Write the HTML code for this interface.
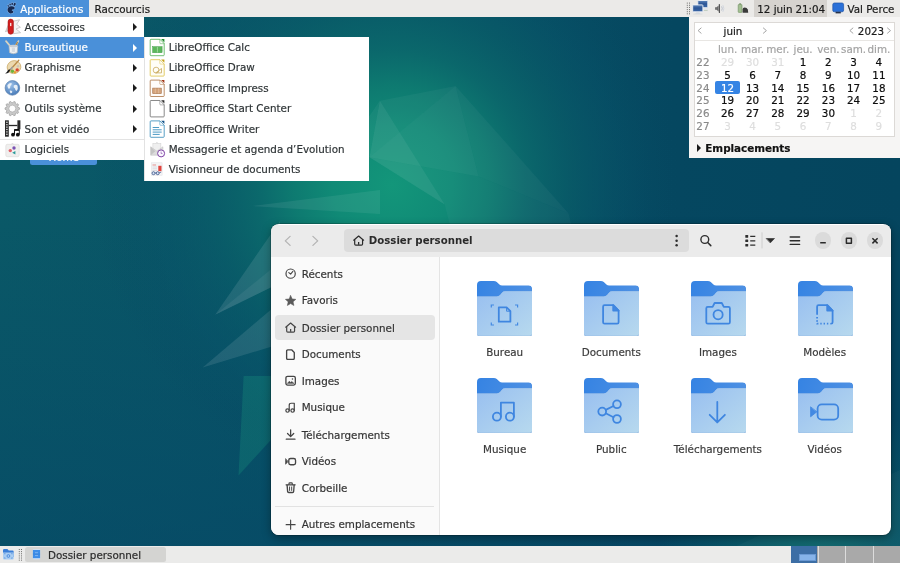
<!DOCTYPE html>
<html lang="fr">
<head>
<meta charset="utf-8">
<title>Bureau</title>
<style>
*{box-sizing:border-box;margin:0;padding:0}
html,body{width:900px;height:563px;overflow:hidden;background:#06485f}
body{position:relative;font-family:"DejaVu Sans","Liberation Sans",sans-serif;font-size:10.35px;color:#2e3436;-webkit-text-stroke:0.18px currentColor}
.abs{position:absolute}
#wall{position:absolute;left:0;top:0;width:900px;height:563px}
/* top panel */
#top,#win,#cal,.menu,#bot{will-change:transform}
#top{position:absolute;left:0;top:0;width:900px;height:16.7px;background:#ebeae8}
#top .t{position:absolute;top:0.5px;height:16.7px;line-height:16.7px;white-space:nowrap;color:#1a1a1a}
#appbtn{position:absolute;left:0;top:0;width:88.5px;height:16.7px;background:#4a90d9}
#clockbg{position:absolute;left:754px;top:0;width:72.7px;height:16.7px;background:#d6d3cf}
/* menus */
.menu{position:absolute;background:#fff}
.mi{position:absolute;left:0;width:100%;height:20.4px;line-height:20.4px;white-space:nowrap}
.mi span{position:absolute;top:0}
.mi.sel{background:#4a90d9;color:#fff}
.arr{position:absolute;width:0;height:0;border-left:4.6px solid #1c1c1c;border-top:4px solid transparent;border-bottom:4px solid transparent}
.sel .arr{border-left-color:#fff}
.ico{position:absolute}
/* calendar */
#cal{position:absolute;left:689.3px;top:16.7px;width:211px;height:141.1px;background:#f6f5f4}
#calbox{position:absolute;left:5px;top:5.3px;width:200.6px;height:114.8px;background:#fff;border:1px solid #dcd9d6}
#cal .c{position:absolute;width:26px;text-align:center;line-height:12.66px;height:12.66px;white-space:nowrap}
#cal .b{color:#0d0d0d;-webkit-text-stroke:0.2px #0d0d0d}
#cal .g{color:#a3a3a3}
#cal .gg{color:#dedede}
#cal .w{color:#8a8a8a}
/* nautilus */
#win{position:absolute;left:270.7px;top:224.1px;width:620px;height:310.9px;border-radius:8px;background:#fff;overflow:hidden;box-shadow:0 0 0 0.7px rgba(0,0,0,.25),0 3px 10px rgba(0,0,0,.35)}
#hb{position:absolute;left:0;top:0;width:100%;height:32.5px;background:#ebebeb}
#side{position:absolute;left:0;top:32.5px;width:168.6px;height:277.5px;background:#fafafa;border-right:1px solid #e4e4e4}
.si{position:absolute;left:30.7px;height:26.75px;line-height:26.75px;white-space:nowrap;color:#333}
.fl{position:absolute;width:106px;text-align:center;line-height:14px;height:14px;color:#3a3a3a;white-space:nowrap}
/* bottom panel */
#bot{position:absolute;left:0;top:546px;width:900px;height:17px;background:#ebebea}
</style>
</head>
<body>
<svg id="wall" viewBox="0 0 900 563">
<defs>
<linearGradient id="wg" x1="0" y1="0" x2="1" y2="0"><stop offset="0" stop-color="#0a5967"/><stop offset="0.45" stop-color="#085366"/><stop offset="0.75" stop-color="#054760"/><stop offset="1" stop-color="#05455e"/></linearGradient>
<linearGradient id="wv" x1="0" y1="0" x2="0" y2="1"><stop offset="0.35" stop-color="#054566" stop-opacity="0"/><stop offset="1" stop-color="#054566" stop-opacity="0.6"/></linearGradient>
<radialGradient id="glow" cx="392" cy="185" r="300" gradientUnits="userSpaceOnUse"><stop offset="0" stop-color="#13967a"/><stop offset="0.2" stop-color="#108a76"/><stop offset="0.33" stop-color="#0e7c71" stop-opacity="0.95"/><stop offset="0.45" stop-color="#0b6a6c" stop-opacity="0.9"/><stop offset="0.6" stop-color="#095f69" stop-opacity="0.65"/><stop offset="0.78" stop-color="#07556a" stop-opacity="0.3"/><stop offset="1" stop-color="#05445f" stop-opacity="0"/></radialGradient>
<radialGradient id="glow2" cx="820" cy="560" r="160" gradientUnits="userSpaceOnUse"><stop offset="0" stop-color="#0c6a6c" stop-opacity="0.9"/><stop offset="1" stop-color="#0c6a6c" stop-opacity="0"/></radialGradient>
</defs>
<rect width="900" height="563" fill="url(#wg)"/>
<rect width="900" height="563" fill="url(#wv)"/>
<rect width="900" height="563" fill="url(#glow)"/>
<rect width="900" height="563" fill="url(#glow2)"/>
<g fill="#ffffff">
<polygon points="455.6,86 568.6,213.4 478.6,176.5" opacity="0.04"/>
<polygon points="455.6,86 478.6,176.5 369.5,157.3" opacity="0.06"/>
<polygon points="379.8,100.7 455.6,86 369.5,157.3" opacity="0.04"/>
<polygon points="379.8,100.7 444.7,204.5 369.5,157.3" opacity="0.06"/>
<polygon points="369.5,157.3 478.6,176.5 568.6,213.4 571.5,226 450,226 444.7,204.5" opacity="0.03"/>
<polygon points="369.5,157.3 379.8,100.7 360,130 350,170" opacity="0.04"/>
<polygon points="252,206 380,190 380,214" opacity="0.07"/>
<polygon points="215.2,314.7 280,221 280,283" opacity="0.1"/>
<polygon points="215.2,314.7 280,262 280,283" opacity="0.06"/>
<polygon points="202.7,367.5 280,302 280,344" opacity="0.1"/>
<polygon points="243.6,376 280,376 280,430 238.5,475.5" fill="#22b08a" opacity="0.22"/>
<polygon points="700,563 900,470 900,563" opacity="0.03"/>
</g>
</svg>

<div id="top">
 <div id="appbtn"></div>
 <div class="t" style="left:20.3px;color:#fff">Applications</div>
 <div class="t" style="left:94.5px">Raccourcis</div>
 <div id="clockbg"></div>
 <svg class="abs" style="left:0;top:0" width="900" height="17" viewBox="0 0 900 17"><g fill="#a9c9f0" stroke="#a9c9f0" stroke-width="1.1" opacity="0.55"><path d="M11.2,6.2 C13.4,6 15,7 14.6,8.4 C14.2,9.6 12.4,9 11.8,10 C11.4,10.8 13.4,10.8 13.4,11.8 C13.2,13 11.6,13.6 10.4,13.4 C8.4,13 7.2,11 7.6,9 C7.9,7.4 9.4,6.3 11.2,6.2 Z"/><ellipse cx="14.6" cy="4.4" rx="1" ry="1.6" transform="rotate(25 14.6 4.4)"/><ellipse cx="12.2" cy="3.9" rx="0.8" ry="1.2" transform="rotate(8 12.2 3.9)"/><ellipse cx="10.1" cy="4.5" rx="0.7" ry="1" transform="rotate(-15 10.1 4.5)"/><ellipse cx="8.3" cy="5.8" rx="0.6" ry="0.9" transform="rotate(-35 8.3 5.8)"/></g><g fill="#17284f"><path d="M11.2,6.2 C13.4,6 15,7 14.6,8.4 C14.2,9.6 12.4,9 11.8,10 C11.4,10.8 13.4,10.8 13.4,11.8 C13.2,13 11.6,13.6 10.4,13.4 C8.4,13 7.2,11 7.6,9 C7.9,7.4 9.4,6.3 11.2,6.2 Z"/><ellipse cx="14.6" cy="4.4" rx="1" ry="1.6" transform="rotate(25 14.6 4.4)"/><ellipse cx="12.2" cy="3.9" rx="0.8" ry="1.2" transform="rotate(8 12.2 3.9)"/><ellipse cx="10.1" cy="4.5" rx="0.7" ry="1" transform="rotate(-15 10.1 4.5)"/><ellipse cx="8.3" cy="5.8" rx="0.6" ry="0.9" transform="rotate(-35 8.3 5.8)"/></g><rect x="686.8" y="2.6" width="1" height="1" fill="#6e6e6c"/><rect x="686.8" y="4.8" width="1" height="1" fill="#6e6e6c"/><rect x="686.8" y="6.9" width="1" height="1" fill="#6e6e6c"/><rect x="686.8" y="9.1" width="1" height="1" fill="#6e6e6c"/><rect x="686.8" y="11.2" width="1" height="1" fill="#6e6e6c"/><rect x="686.8" y="13.3" width="1" height="1" fill="#6e6e6c"/><rect x="689.0" y="2.6" width="1" height="1" fill="#6e6e6c"/><rect x="689.0" y="4.8" width="1" height="1" fill="#6e6e6c"/><rect x="689.0" y="6.9" width="1" height="1" fill="#6e6e6c"/><rect x="689.0" y="9.1" width="1" height="1" fill="#6e6e6c"/><rect x="689.0" y="11.2" width="1" height="1" fill="#6e6e6c"/><rect x="689.0" y="13.3" width="1" height="1" fill="#6e6e6c"/><defs><linearGradient id="scr" x1="0" y1="0" x2="0" y2="1"><stop offset="0" stop-color="#5f86bb"/><stop offset="0.45" stop-color="#2c5596"/><stop offset="1" stop-color="#3a66a6"/></linearGradient></defs><rect x="697.8" y="0.5" width="10" height="7.2" rx="0.7" fill="url(#scr)" stroke="#eef2f7" stroke-width="0.9"/><rect x="703.4" y="8.2" width="4.6" height="3" fill="#e1e4e8"/><rect x="703.8" y="10.2" width="3.8" height="0.7" fill="#b8c6b0"/><rect x="692.7" y="4.9" width="10.2" height="6.9" rx="0.7" fill="url(#scr)" stroke="#eef2f7" stroke-width="0.9"/><path d="M696.4,12.3 L695,14 H700.6 L699.4,12.3 Z" fill="#d9dde2"/><path d="M693.4,14.1 H702.4" stroke="#cfd3d8" stroke-width="0.6"/><path d="M715.2,8.5 L718.6,5.6 V11.4 Z" fill="#6b6b6b"/><rect x="718.8" y="4.1" width="1.2" height="8.8" rx="0.5" fill="#555"/><path d="M715,7.2 H716.8 V9.8 H715 Z" fill="#777"/><path d="M721.6,6.4 Q723,8.5 721.6,10.6" fill="none" stroke="#b5bcc8" stroke-width="0.9"/><path d="M722.9,5.2 Q724.9,8.5 722.9,11.8" fill="none" stroke="#cfd5de" stroke-width="0.9"/><rect x="738.2" y="4.4" width="3.8" height="8" rx="0.6" fill="#a3bf92" stroke="#6f8f60" stroke-width="0.6"/><rect x="739.2" y="3.4" width="1.8" height="1.1" fill="#6f8f60"/><path d="M742.6,9.4 Q742.6,7.6 744.6,7.6 Q747,7.6 747.8,9.6 L748.2,12.8 H742.6 Z" fill="#3a3a3a"/><rect x="832.8" y="3" width="10.8" height="8.8" rx="1.6" fill="#2a70d8" stroke="#1e55a8" stroke-width="0.7"/><path d="M835.6,12.6 H840.8" stroke="#26324a" stroke-width="1.6"/></svg>
 <div class="t" style="left:757.2px">12 juin</div>
 <div class="t" style="left:795.4px">21:04</div>
 <div class="t" style="left:847.4px">Val Perce</div>
</div>

<div class="abs" id="homelbl" style="left:29.6px;top:149.2px;width:67.4px;height:15.8px;line-height:16.4px;border-radius:2.5px;background:#4a90d9;color:#fff;text-align:center;will-change:transform">Home</div>
<div id="win">
<div class="abs" style="left:0;top:0.9px;width:620px;height:310px">
 <div id="hb"></div>
 <div id="side"></div>
 <div class="abs" style="left:73.3px;top:4.2px;width:344.7px;height:22.6px;border-radius:4px;background:#dcdcdc"></div>
 <div class="abs" style="left:97.8px;top:5.1px;line-height:22.6px;font-weight:bold;font-size:10.2px;-webkit-text-stroke:0;color:#2a2a2a;white-space:nowrap">Dossier personnel</div>
 <div class="abs" style="left:543.6px;top:7.4px;width:16.8px;height:16.8px;border-radius:50%;background:#dbdbdb"></div>
 <div class="abs" style="left:569.5px;top:7.4px;width:16.8px;height:16.8px;border-radius:50%;background:#dbdbdb"></div>
 <div class="abs" style="left:595.6px;top:7.4px;width:16.8px;height:16.8px;border-radius:50%;background:#dbdbdb"></div>
 <svg class="abs" style="left:0;top:0" width="620" height="32" viewBox="0 0 620 32" fill="none" stroke-linecap="round" stroke-linejoin="round"><path d="M19.1,11.4 L14.3,15.9 L19.1,20.4" stroke="#b4b4b4" stroke-width="1.3"/><path d="M41.9,11.4 L46.7,15.9 L41.9,20.4" stroke="#b4b4b4" stroke-width="1.3"/><circle cx="405.6" cy="11.1" r="1.25" fill="#2e2e2e"/><circle cx="405.6" cy="15.7" r="1.25" fill="#2e2e2e"/><circle cx="405.6" cy="20.3" r="1.25" fill="#2e2e2e"/><circle cx="433.8" cy="14.5" r="3.9" stroke="#2e2e2e" stroke-width="1.4"/><path d="M436.7,17.5 L439.8,20.6" stroke="#2e2e2e" stroke-width="1.5"/><rect x="474.3" y="10.1" width="2.9" height="2.6" rx="0.5" fill="#2e2e2e"/><path d="M479.2,11.4 H484.3" stroke="#2e2e2e" stroke-width="1.3" stroke-linecap="butt"/><rect x="474.3" y="14.5" width="2.9" height="2.6" rx="0.5" fill="#2e2e2e"/><path d="M479.2,15.8 H484.3" stroke="#2e2e2e" stroke-width="1.3" stroke-linecap="butt"/><rect x="474.3" y="18.9" width="2.9" height="2.6" rx="0.5" fill="#2e2e2e"/><path d="M479.2,20.2 H484.3" stroke="#2e2e2e" stroke-width="1.3" stroke-linecap="butt"/><path d="M491.0,7.8 V23.0" stroke="#c6c6c6" stroke-width="0.8"/><path d="M495.5,13.5 H503.5 L499.5,17.7 Z" fill="#2e2e2e" stroke="#2e2e2e" stroke-width="0.6"/><path d="M519.2,12.0 H528.6" stroke="#2e2e2e" stroke-width="1.4"/><path d="M519.2,15.7 H528.6" stroke="#2e2e2e" stroke-width="1.4"/><path d="M519.2,19.4 H528.6" stroke="#2e2e2e" stroke-width="1.4"/><path d="M549.2,17.8 H554.8" stroke="#2a2a2a" stroke-width="1.5" stroke-linecap="butt"/><rect x="575.4" y="13.2" width="5" height="5" stroke="#2a2a2a" stroke-width="1.5"/><path d="M601.4,13.2 L606.6,18.4 M606.6,13.2 L601.4,18.4" stroke="#2a2a2a" stroke-width="1.5" stroke-linecap="butt"/></svg>
 <div class="abs" style="left:4.3px;top:90.2px;width:160px;height:24.9px;border-radius:4px;background:#e5e5e5"></div>
 <div class="si" style="top:35.82px">Récents</div>
 <div class="si" style="top:62.57px">Favoris</div>
 <div class="si" style="top:90.0px">Dossier personnel</div>
 <div class="si" style="top:116.4px">Documents</div>
 <div class="si" style="top:142.82px">Images</div>
 <div class="si" style="top:169.57px">Musique</div>
 <div class="si" style="top:196.9px">Téléchargements</div>
 <div class="si" style="top:223.4px">Vidéos</div>
 <div class="si" style="top:249.82px">Corbeille</div>
 <svg class="abs" style="left:14.30px;top:43.60px" width="11.25" height="11.25" viewBox="0 0 16 16" fill="none" stroke="#454545" stroke-width="1.9" stroke-linecap="round" stroke-linejoin="round" ><circle cx="8" cy="8" r="6.6" stroke-width="1.7"/><path d="M5.4,6.6 L8,8.6 L11.2,4.8" stroke-width="1.6"/></svg>
 <svg class="abs" style="left:14.30px;top:70.35px" width="11.25" height="11.25" viewBox="0 0 16 16" fill="none" stroke="#454545" stroke-width="1.9" stroke-linecap="round" stroke-linejoin="round" ><path d="M8,0.8 L10.2,5.6 L15.4,6.2 L11.5,9.7 L12.6,14.9 L8,12.2 L3.4,14.9 L4.5,9.7 L0.6,6.2 L5.8,5.6 Z" fill="#5a5a5a" stroke="#5a5a5a" stroke-width="0.8"/></svg>
 <svg class="abs" style="left:14.30px;top:97.10px" width="11.25" height="11.25" viewBox="0 0 16 16" fill="none" stroke="#454545" stroke-width="1.9" stroke-linecap="round" stroke-linejoin="round" ><path d="M1,7.4 L8,1.5 L15,7.4" stroke-width="1.7"/><path d="M2.4,6.6 V12.7 Q2.4,14.3 4,14.3 H12 Q13.6,14.3 13.6,12.7 V6.6" stroke-width="1.7"/><path d="M8,9.9 V14" stroke-width="1.8" stroke-linecap="butt"/></svg>
 <svg class="abs" style="left:14.30px;top:123.85px" width="11.25" height="11.25" viewBox="0 0 16 16" fill="none" stroke="#454545" stroke-width="1.9" stroke-linecap="round" stroke-linejoin="round" ><path d="M3.9,1.2 H9.4 L13.2,5 V13.3 Q13.2,14.9 11.6,14.9 H3.9 Q2.3,14.9 2.3,13.3 V2.8 Q2.3,1.2 3.9,1.2 Z"/></svg>
 <svg class="abs" style="left:14.30px;top:150.60px" width="11.25" height="11.25" viewBox="0 0 16 16" fill="none" stroke="#454545" stroke-width="1.9" stroke-linecap="round" stroke-linejoin="round" ><rect x="1.3" y="1.9" width="13.4" height="12.4" rx="2.4"/><path d="M3.6,11.6 L6.2,8.8 L8,10.6 L9.6,9.2 L12.4,11.6 Z" fill="#454545" stroke-width="0.8"/><circle cx="10.6" cy="5.6" r="1.1" fill="#454545" stroke="none"/></svg>
 <svg class="abs" style="left:14.30px;top:177.35px" width="11.25" height="11.25" viewBox="0 0 16 16" fill="none" stroke="#454545" stroke-width="1.9" stroke-linecap="round" stroke-linejoin="round" ><circle cx="3.6" cy="12.2" r="2.4" stroke-width="1.7"/><circle cx="10.8" cy="12.2" r="2.4" stroke-width="1.7"/><path d="M6,12.2 V4.6 Q6,1.8 8.8,1.8 H13.2 V12.2" stroke-width="1.7"/></svg>
 <svg class="abs" style="left:14.30px;top:204.10px" width="11.25" height="11.25" viewBox="0 0 16 16" fill="none" stroke="#454545" stroke-width="1.9" stroke-linecap="round" stroke-linejoin="round" ><path d="M8,1.2 V10.6 M3.6,6.4 L8,10.8 L12.4,6.4" stroke-width="1.8"/><path d="M1.8,14.4 H14.2" stroke-width="1.8"/></svg>
 <svg class="abs" style="left:14.30px;top:230.85px" width="11.25" height="11.25" viewBox="0 0 16 16" fill="none" stroke="#454545" stroke-width="1.9" stroke-linecap="round" stroke-linejoin="round" ><rect x="5.4" y="3.6" width="9.6" height="8.8" rx="2.6"/><path d="M0.8,4.2 V11.8 L4.2,8 Z" fill="#454545" stroke-width="0.9"/></svg>
 <svg class="abs" style="left:14.30px;top:257.60px" width="11.25" height="11.25" viewBox="0 0 16 16" fill="none" stroke="#454545" stroke-width="1.9" stroke-linecap="round" stroke-linejoin="round" ><path d="M1.6,4 H14.4"/><path d="M5.6,3.6 V2.4 Q5.6,1.2 6.8,1.2 H9.2 Q10.4,1.2 10.4,2.4 V3.6" stroke-width="1.6"/><path d="M3,4.4 L3.7,13.4 Q3.8,14.9 5.3,14.9 H10.7 Q12.2,14.9 12.3,13.4 L13,4.4"/><path d="M6.5,7 V12 M9.5,7 V12" stroke-width="1.4"/></svg>
 <svg class="abs" style="left:14.00px;top:293.90px" width="11.25" height="11.25" viewBox="0 0 16 16" fill="none" stroke="#454545" stroke-width="1.9" stroke-linecap="round" stroke-linejoin="round" ><path d="M8,1.6 V14.4 M1.6,8 H14.4" stroke-width="1.6"/></svg>
 <svg class="abs" style="left:82.30px;top:10.20px" width="11.25" height="11.25" viewBox="0 0 16 16" fill="none" stroke="#2a2a2a" stroke-width="1.9" stroke-linecap="round" stroke-linejoin="round" ><path d="M1,7.4 L8,1.5 L15,7.4" stroke-width="1.7"/><path d="M2.4,6.6 V12.7 Q2.4,14.3 4,14.3 H12 Q13.6,14.3 13.6,12.7 V6.6" stroke-width="1.7"/><path d="M8,9.9 V14" stroke-width="1.8" stroke-linecap="butt"/></svg>
 <div class="abs" style="left:4.3px;top:281.4px;width:159px;height:1px;background:#e2e2e2"></div>
 <div class="si" style="top:286.02px">Autres emplacements</div>
 <svg class="abs" style="left:206.1px;top:56.2px" width="55.2" height="55.4" viewBox="0 0 55.2 55.4">
<defs><linearGradient id="fb0" x1="0" y1="0" x2="1" y2="0.3"><stop offset="0" stop-color="#3583e3"/><stop offset="1" stop-color="#4f91e3"/></linearGradient>
<linearGradient id="ff0" x1="0" y1="0" x2="1" y2="1"><stop offset="0" stop-color="#98bff0"/><stop offset="1" stop-color="#b7d9ee"/></linearGradient></defs>
<path d="M0,4 Q0,0 4,0 H16.8 Q18.6,0 19.8,1.1 L22.4,3.6 Q23.5,4.6 25.1,4.6 H51.6 Q55.2,4.6 55.2,8.2 V50 H0 Z" fill="url(#fb0)"/>
<path d="M0,15.4 H19.8 Q21.8,15.4 23.1,13.9 L25,11.7 Q26.2,10.3 28.2,10.3 H55.2 V52.9 Q55.2,55.4 52.7,55.4 H2.5 Q0,55.4 0,52.9 Z" fill="#8db2de"/>
<path d="M0,15.4 H19.8 Q21.8,15.4 23.1,13.9 L25,11.7 Q26.2,10.3 28.2,10.3 H55.2 V52.2 Q55.2,54.7 52.7,54.7 H2.5 Q0,54.7 0,52.2 Z" fill="url(#ff0)"/>
<g fill="none" stroke="#3f86e0" stroke-width="1.8" stroke-linecap="round" stroke-linejoin="round" stroke-width="1.5"><path d="M21.8,26.4 H29.6 L33.4,30.2 V40.7 H21.8 Z"/><path d="M29.6,26.4 V30.2 H33.4" stroke-width="1"/></g>
<g fill="none" stroke="#4389e2" stroke-width="1.2" stroke-linecap="butt"><path d="M14.3,26.6 V24 H17"/><path d="M38,24 H40.6 V26.6"/><path d="M14.3,41.4 V44 H17"/><path d="M38,44 H40.6 V41.4"/></g>
</svg>
 <div class="fl" style="left:180.7px;top:120.0px">Bureau</div>
 <svg class="abs" style="left:313.0px;top:56.2px" width="55.2" height="55.4" viewBox="0 0 55.2 55.4">
<defs><linearGradient id="fb1" x1="0" y1="0" x2="1" y2="0.3"><stop offset="0" stop-color="#3583e3"/><stop offset="1" stop-color="#4f91e3"/></linearGradient>
<linearGradient id="ff1" x1="0" y1="0" x2="1" y2="1"><stop offset="0" stop-color="#98bff0"/><stop offset="1" stop-color="#b7d9ee"/></linearGradient></defs>
<path d="M0,4 Q0,0 4,0 H16.8 Q18.6,0 19.8,1.1 L22.4,3.6 Q23.5,4.6 25.1,4.6 H51.6 Q55.2,4.6 55.2,8.2 V50 H0 Z" fill="url(#fb1)"/>
<path d="M0,15.4 H19.8 Q21.8,15.4 23.1,13.9 L25,11.7 Q26.2,10.3 28.2,10.3 H55.2 V52.9 Q55.2,55.4 52.7,55.4 H2.5 Q0,55.4 0,52.9 Z" fill="#8db2de"/>
<path d="M0,15.4 H19.8 Q21.8,15.4 23.1,13.9 L25,11.7 Q26.2,10.3 28.2,10.3 H55.2 V52.2 Q55.2,54.7 52.7,54.7 H2.5 Q0,54.7 0,52.2 Z" fill="url(#ff1)"/>
<g fill="none" stroke="#3f86e0" stroke-width="1.8" stroke-linecap="round" stroke-linejoin="round"><path d="M20.6,24.2 H29.2 L34.6,29.6 V41.2 Q34.6,42.7 33.1,42.7 H20.6 Q19.1,42.7 19.1,41.2 V25.7 Q19.1,24.2 20.6,24.2 Z"/><path d="M29.2,24.2 V29.6 H34.6 Z" fill="#4389e2"/></g>
</svg>
 <div class="fl" style="left:287.3px;top:120.0px">Documents</div>
 <svg class="abs" style="left:419.8px;top:56.2px" width="55.2" height="55.4" viewBox="0 0 55.2 55.4">
<defs><linearGradient id="fb2" x1="0" y1="0" x2="1" y2="0.3"><stop offset="0" stop-color="#3583e3"/><stop offset="1" stop-color="#4f91e3"/></linearGradient>
<linearGradient id="ff2" x1="0" y1="0" x2="1" y2="1"><stop offset="0" stop-color="#98bff0"/><stop offset="1" stop-color="#b7d9ee"/></linearGradient></defs>
<path d="M0,4 Q0,0 4,0 H16.8 Q18.6,0 19.8,1.1 L22.4,3.6 Q23.5,4.6 25.1,4.6 H51.6 Q55.2,4.6 55.2,8.2 V50 H0 Z" fill="url(#fb2)"/>
<path d="M0,15.4 H19.8 Q21.8,15.4 23.1,13.9 L25,11.7 Q26.2,10.3 28.2,10.3 H55.2 V52.9 Q55.2,55.4 52.7,55.4 H2.5 Q0,55.4 0,52.9 Z" fill="#8db2de"/>
<path d="M0,15.4 H19.8 Q21.8,15.4 23.1,13.9 L25,11.7 Q26.2,10.3 28.2,10.3 H55.2 V52.2 Q55.2,54.7 52.7,54.7 H2.5 Q0,54.7 0,52.2 Z" fill="url(#ff2)"/>
<g fill="none" stroke="#3f86e0" stroke-width="1.8" stroke-linecap="round" stroke-linejoin="round"><path d="M16.8,25.8 H21.6 L23.6,22 H30.8 L32.8,25.8 H37.4 Q38.9,25.8 38.9,27.3 V41.2 Q38.9,42.7 37.4,42.7 H16.8 Q15.3,42.7 15.3,41.2 V27.3 Q15.3,25.8 16.8,25.8 Z"/><circle cx="27.1" cy="33.7" r="4.6"/></g>
</svg>
 <div class="fl" style="left:393.9px;top:120.0px">Images</div>
 <svg class="abs" style="left:526.5px;top:56.2px" width="55.2" height="55.4" viewBox="0 0 55.2 55.4">
<defs><linearGradient id="fb3" x1="0" y1="0" x2="1" y2="0.3"><stop offset="0" stop-color="#3583e3"/><stop offset="1" stop-color="#4f91e3"/></linearGradient>
<linearGradient id="ff3" x1="0" y1="0" x2="1" y2="1"><stop offset="0" stop-color="#98bff0"/><stop offset="1" stop-color="#b7d9ee"/></linearGradient></defs>
<path d="M0,4 Q0,0 4,0 H16.8 Q18.6,0 19.8,1.1 L22.4,3.6 Q23.5,4.6 25.1,4.6 H51.6 Q55.2,4.6 55.2,8.2 V50 H0 Z" fill="url(#fb3)"/>
<path d="M0,15.4 H19.8 Q21.8,15.4 23.1,13.9 L25,11.7 Q26.2,10.3 28.2,10.3 H55.2 V52.9 Q55.2,55.4 52.7,55.4 H2.5 Q0,55.4 0,52.9 Z" fill="#8db2de"/>
<path d="M0,15.4 H19.8 Q21.8,15.4 23.1,13.9 L25,11.7 Q26.2,10.3 28.2,10.3 H55.2 V52.2 Q55.2,54.7 52.7,54.7 H2.5 Q0,54.7 0,52.2 Z" fill="url(#ff3)"/>
<g fill="none" stroke="#3f86e0" stroke-width="1.8" stroke-linecap="round" stroke-linejoin="round"><path d="M19.1,33 V25.7 Q19.1,24.2 20.6,24.2 H29.2 L34.6,29.6 V41.2 Q34.6,42.7 33.1,42.7"/><path d="M29.2,24.2 V29.6 H34.6 Z" fill="#4389e2"/><path d="M19.1,36 V42.7 H31" stroke-dasharray="1.4 1.9" stroke-linecap="butt"/></g>
</svg>
 <div class="fl" style="left:500.7px;top:120.0px">Modèles</div>
 <svg class="abs" style="left:206.1px;top:153.2px" width="55.2" height="55.4" viewBox="0 0 55.2 55.4">
<defs><linearGradient id="fb4" x1="0" y1="0" x2="1" y2="0.3"><stop offset="0" stop-color="#3583e3"/><stop offset="1" stop-color="#4f91e3"/></linearGradient>
<linearGradient id="ff4" x1="0" y1="0" x2="1" y2="1"><stop offset="0" stop-color="#98bff0"/><stop offset="1" stop-color="#b7d9ee"/></linearGradient></defs>
<path d="M0,4 Q0,0 4,0 H16.8 Q18.6,0 19.8,1.1 L22.4,3.6 Q23.5,4.6 25.1,4.6 H51.6 Q55.2,4.6 55.2,8.2 V50 H0 Z" fill="url(#fb4)"/>
<path d="M0,15.4 H19.8 Q21.8,15.4 23.1,13.9 L25,11.7 Q26.2,10.3 28.2,10.3 H55.2 V52.9 Q55.2,55.4 52.7,55.4 H2.5 Q0,55.4 0,52.9 Z" fill="#8db2de"/>
<path d="M0,15.4 H19.8 Q21.8,15.4 23.1,13.9 L25,11.7 Q26.2,10.3 28.2,10.3 H55.2 V52.2 Q55.2,54.7 52.7,54.7 H2.5 Q0,54.7 0,52.2 Z" fill="url(#ff4)"/>
<g fill="none" stroke="#3f86e0" stroke-width="1.8" stroke-linecap="round" stroke-linejoin="round"><circle cx="19.9" cy="38.7" r="4"/><circle cx="32.9" cy="38.7" r="4"/><path d="M23.9,38.7 V24.6 H36.9 V38.7"/></g>
</svg>
 <div class="fl" style="left:180.7px;top:217.0px">Musique</div>
 <svg class="abs" style="left:313.0px;top:153.2px" width="55.2" height="55.4" viewBox="0 0 55.2 55.4">
<defs><linearGradient id="fb5" x1="0" y1="0" x2="1" y2="0.3"><stop offset="0" stop-color="#3583e3"/><stop offset="1" stop-color="#4f91e3"/></linearGradient>
<linearGradient id="ff5" x1="0" y1="0" x2="1" y2="1"><stop offset="0" stop-color="#98bff0"/><stop offset="1" stop-color="#b7d9ee"/></linearGradient></defs>
<path d="M0,4 Q0,0 4,0 H16.8 Q18.6,0 19.8,1.1 L22.4,3.6 Q23.5,4.6 25.1,4.6 H51.6 Q55.2,4.6 55.2,8.2 V50 H0 Z" fill="url(#fb5)"/>
<path d="M0,15.4 H19.8 Q21.8,15.4 23.1,13.9 L25,11.7 Q26.2,10.3 28.2,10.3 H55.2 V52.9 Q55.2,55.4 52.7,55.4 H2.5 Q0,55.4 0,52.9 Z" fill="#8db2de"/>
<path d="M0,15.4 H19.8 Q21.8,15.4 23.1,13.9 L25,11.7 Q26.2,10.3 28.2,10.3 H55.2 V52.2 Q55.2,54.7 52.7,54.7 H2.5 Q0,54.7 0,52.2 Z" fill="url(#ff5)"/>
<g fill="none" stroke="#3f86e0" stroke-width="1.8" stroke-linecap="round" stroke-linejoin="round"><circle cx="18.2" cy="33.6" r="3.9"/><circle cx="33" cy="26.3" r="3.9"/><circle cx="33" cy="41" r="3.9"/><path d="M21.7,31.9 L29.5,28 M21.7,35.3 L29.5,39.3"/></g>
</svg>
 <div class="fl" style="left:287.3px;top:217.0px">Public</div>
 <svg class="abs" style="left:419.8px;top:153.2px" width="55.2" height="55.4" viewBox="0 0 55.2 55.4">
<defs><linearGradient id="fb6" x1="0" y1="0" x2="1" y2="0.3"><stop offset="0" stop-color="#3583e3"/><stop offset="1" stop-color="#4f91e3"/></linearGradient>
<linearGradient id="ff6" x1="0" y1="0" x2="1" y2="1"><stop offset="0" stop-color="#98bff0"/><stop offset="1" stop-color="#b7d9ee"/></linearGradient></defs>
<path d="M0,4 Q0,0 4,0 H16.8 Q18.6,0 19.8,1.1 L22.4,3.6 Q23.5,4.6 25.1,4.6 H51.6 Q55.2,4.6 55.2,8.2 V50 H0 Z" fill="url(#fb6)"/>
<path d="M0,15.4 H19.8 Q21.8,15.4 23.1,13.9 L25,11.7 Q26.2,10.3 28.2,10.3 H55.2 V52.9 Q55.2,55.4 52.7,55.4 H2.5 Q0,55.4 0,52.9 Z" fill="#8db2de"/>
<path d="M0,15.4 H19.8 Q21.8,15.4 23.1,13.9 L25,11.7 Q26.2,10.3 28.2,10.3 H55.2 V52.2 Q55.2,54.7 52.7,54.7 H2.5 Q0,54.7 0,52.2 Z" fill="url(#ff6)"/>
<g fill="none" stroke="#3f86e0" stroke-width="1.8" stroke-linecap="round" stroke-linejoin="round"><path d="M26.3,24 V44.4 M18.7,36.8 L26.3,44.4 L33.9,36.8"/></g>
</svg>
 <div class="fl" style="left:393.9px;top:217.0px">Téléchargements</div>
 <svg class="abs" style="left:526.5px;top:153.2px" width="55.2" height="55.4" viewBox="0 0 55.2 55.4">
<defs><linearGradient id="fb7" x1="0" y1="0" x2="1" y2="0.3"><stop offset="0" stop-color="#3583e3"/><stop offset="1" stop-color="#4f91e3"/></linearGradient>
<linearGradient id="ff7" x1="0" y1="0" x2="1" y2="1"><stop offset="0" stop-color="#98bff0"/><stop offset="1" stop-color="#b7d9ee"/></linearGradient></defs>
<path d="M0,4 Q0,0 4,0 H16.8 Q18.6,0 19.8,1.1 L22.4,3.6 Q23.5,4.6 25.1,4.6 H51.6 Q55.2,4.6 55.2,8.2 V50 H0 Z" fill="url(#fb7)"/>
<path d="M0,15.4 H19.8 Q21.8,15.4 23.1,13.9 L25,11.7 Q26.2,10.3 28.2,10.3 H55.2 V52.9 Q55.2,55.4 52.7,55.4 H2.5 Q0,55.4 0,52.9 Z" fill="#8db2de"/>
<path d="M0,15.4 H19.8 Q21.8,15.4 23.1,13.9 L25,11.7 Q26.2,10.3 28.2,10.3 H55.2 V52.2 Q55.2,54.7 52.7,54.7 H2.5 Q0,54.7 0,52.2 Z" fill="url(#ff7)"/>
<g fill="none" stroke="#3f86e0" stroke-width="1.8" stroke-linecap="round" stroke-linejoin="round"><rect x="19.6" y="26.4" width="20.6" height="15.3" rx="4.2"/><path d="M12.6,29.2 V38.8 L18.6,34 Z" fill="#4389e2" stroke-width="0.8"/></g>
</svg>
 <div class="fl" style="left:500.7px;top:217.0px">Vidéos</div>
</div>
</div>
<div id="bot">
 <div class="abs" style="left:25px;top:1.4px;width:140.6px;height:14.2px;border-radius:2.5px;background:#d4d4d2"></div>
 <svg class="abs" style="left:0;top:0" width="60" height="17" viewBox="0 546 60 17"><path d="M3,550.2 Q3,549 4.2,549 H7.4 L8.8,550.6 H12.6 Q13.7,550.6 13.7,551.7 V557 H3 Z" fill="#3a7fd8"/><path d="M3,552.6 H13.7 V558.4 Q13.7,559.4 12.7,559.4 H4 Q3,559.4 3,558.4 Z" fill="#a9cdf2"/><circle cx="8.4" cy="556" r="1.4" fill="none" stroke="#3f83da" stroke-width="0.8"/><path d="M4.6,554.2 v-0.6 h0.8 M11.4,553.6 h0.8 v0.6 M4.6,557.6 v0.6 h0.8 M11.4,558.2 h0.8 v-0.6" fill="none" stroke="#3f83da" stroke-width="0.7"/><rect x="18.8" y="549.00" width="1" height="1" fill="#6e6e6c"/><rect x="18.8" y="551.13" width="1" height="1" fill="#6e6e6c"/><rect x="18.8" y="553.26" width="1" height="1" fill="#6e6e6c"/><rect x="18.8" y="555.39" width="1" height="1" fill="#6e6e6c"/><rect x="18.8" y="557.52" width="1" height="1" fill="#6e6e6c"/><rect x="18.8" y="559.65" width="1" height="1" fill="#6e6e6c"/><rect x="21.0" y="549.00" width="1" height="1" fill="#6e6e6c"/><rect x="21.0" y="551.13" width="1" height="1" fill="#6e6e6c"/><rect x="21.0" y="553.26" width="1" height="1" fill="#6e6e6c"/><rect x="21.0" y="555.39" width="1" height="1" fill="#6e6e6c"/><rect x="21.0" y="557.52" width="1" height="1" fill="#6e6e6c"/><rect x="21.0" y="559.65" width="1" height="1" fill="#6e6e6c"/></svg>
 <svg class="abs" style="left:32px;top:3.4px" width="9" height="10.4" viewBox="0 0 9 10.4"><rect x="0.9" y="0.2" width="7.2" height="10" rx="0.6" fill="#cfe3fb"/><rect x="0.9" y="1" width="7.2" height="8.2" fill="#3f8ee9"/><path d="M3,3.8 h3 M3,6.6 h3" stroke="#9ec6f4" stroke-width="0.7"/><path d="M0.9,5.1 h7.2" stroke="#3078d0" stroke-width="0.4"/></svg>
 <div class="abs" style="left:48px;top:1.9px;line-height:14.2px;white-space:nowrap;color:#2a2a2a">Dossier personnel</div>
 <div class="abs" style="left:791.3px;top:0;width:108.7px;height:17px;background:#a9a9a9"></div>
 <div class="abs" style="left:791.3px;top:0;width:26px;height:17px;background:#3c6ea5"></div>
 <div class="abs" style="left:798.7px;top:7.7px;width:17.6px;height:7.8px;background:#86b3e9;border:1px solid #6a99d3"></div>
 <div class="abs" style="left:818.2px;top:0;width:1.1px;height:17px;background:#dcdcdc"></div>
 <div class="abs" style="left:845.2px;top:0;width:1.1px;height:17px;background:#dcdcdc"></div>
 <div class="abs" style="left:872.9px;top:0;width:1.1px;height:17px;background:#dcdcdc"></div>
</div>
<div id="cal">
<div id="calbox"></div>
 <svg class="abs" style="left:0;top:0" width="211" height="30" viewBox="0 0 211 30" fill="none" stroke="#9a9a9a" stroke-width="0.9" stroke-linecap="round" stroke-linejoin="round"><path d="M12.1,11.0 L9.1,13.6 L12.1,16.2"/><path d="M74.4,11.0 L77.4,13.6 L74.4,16.2"/><path d="M163.9,11.0 L160.9,13.6 L163.9,16.2"/><path d="M198.5,11.0 L201.5,13.6 L198.5,16.2"/></svg>
 <div class="c" style="left:22px;top:8px;width:44px;color:#1a1a1a">juin</div>
 <div class="c" style="left:160px;top:8px;width:44px;color:#1a1a1a">2023</div>
 <div class="abs" style="left:6px;top:22.7px;width:198.6px;height:1px;background:#e8e6e3"></div>
 <div class="c g" style="left:25.6px;top:26.2px">lun.</div>
 <div class="c g" style="left:50.6px;top:26.2px">mar.</div>
 <div class="c g" style="left:75.8px;top:26.2px">mer.</div>
 <div class="c g" style="left:101.1px;top:26.2px">jeu.</div>
 <div class="c g" style="left:126.4px;top:26.2px">ven.</div>
 <div class="c g" style="left:151.6px;top:26.2px">sam.</div>
 <div class="c g" style="left:176.9px;top:26.2px">dim.</div>
 <div class="c w" style="left:0.9px;top:39.20px">22</div>
 <div class="c gg" style="left:25.6px;top:39.20px">29</div>
 <div class="c gg" style="left:50.6px;top:39.20px">30</div>
 <div class="c gg" style="left:75.8px;top:39.20px">31</div>
 <div class="c b" style="left:101.1px;top:39.20px">1</div>
 <div class="c b" style="left:126.4px;top:39.20px">2</div>
 <div class="c b" style="left:151.6px;top:39.20px">3</div>
 <div class="c b" style="left:176.9px;top:39.20px">4</div>
 <div class="c w" style="left:0.9px;top:51.86px">23</div>
 <div class="c b" style="left:25.6px;top:51.86px">5</div>
 <div class="c b" style="left:50.6px;top:51.86px">6</div>
 <div class="c b" style="left:75.8px;top:51.86px">7</div>
 <div class="c b" style="left:101.1px;top:51.86px">8</div>
 <div class="c b" style="left:126.4px;top:51.86px">9</div>
 <div class="c b" style="left:151.6px;top:51.86px">10</div>
 <div class="c b" style="left:176.9px;top:51.86px">11</div>
 <div class="c w" style="left:0.9px;top:64.52px">24</div>
 <div class="abs" style="left:26.1px;top:64.12px;width:24.6px;height:12.4px;background:#3584e4;border-radius:2px"></div>
 <div class="c" style="left:25.6px;top:64.52px;color:#fff">12</div>
 <div class="c b" style="left:50.6px;top:64.52px">13</div>
 <div class="c b" style="left:75.8px;top:64.52px">14</div>
 <div class="c b" style="left:101.1px;top:64.52px">15</div>
 <div class="c b" style="left:126.4px;top:64.52px">16</div>
 <div class="c b" style="left:151.6px;top:64.52px">17</div>
 <div class="c b" style="left:176.9px;top:64.52px">18</div>
 <div class="c w" style="left:0.9px;top:77.18px">25</div>
 <div class="c b" style="left:25.6px;top:77.18px">19</div>
 <div class="c b" style="left:50.6px;top:77.18px">20</div>
 <div class="c b" style="left:75.8px;top:77.18px">21</div>
 <div class="c b" style="left:101.1px;top:77.18px">22</div>
 <div class="c b" style="left:126.4px;top:77.18px">23</div>
 <div class="c b" style="left:151.6px;top:77.18px">24</div>
 <div class="c b" style="left:176.9px;top:77.18px">25</div>
 <div class="c w" style="left:0.9px;top:89.84px">26</div>
 <div class="c b" style="left:25.6px;top:89.84px">26</div>
 <div class="c b" style="left:50.6px;top:89.84px">27</div>
 <div class="c b" style="left:75.8px;top:89.84px">28</div>
 <div class="c b" style="left:101.1px;top:89.84px">29</div>
 <div class="c b" style="left:126.4px;top:89.84px">30</div>
 <div class="c gg" style="left:151.6px;top:89.84px">1</div>
 <div class="c gg" style="left:176.9px;top:89.84px">2</div>
 <div class="c w" style="left:0.9px;top:102.50px">27</div>
 <div class="c gg" style="left:25.6px;top:102.50px">3</div>
 <div class="c gg" style="left:50.6px;top:102.50px">4</div>
 <div class="c gg" style="left:75.8px;top:102.50px">5</div>
 <div class="c gg" style="left:101.1px;top:102.50px">6</div>
 <div class="c gg" style="left:126.4px;top:102.50px">7</div>
 <div class="c gg" style="left:151.6px;top:102.50px">8</div>
 <div class="c gg" style="left:176.9px;top:102.50px">9</div>
 <div class="abs" style="left:7.8px;top:127.2px;width:0;height:0;border-left:4.7px solid #1a1a1a;border-top:4.1px solid transparent;border-bottom:4.1px solid transparent"></div>
 <div class="abs" style="left:16.3px;top:123.5px;line-height:14px;font-weight:bold;color:#111;white-space:nowrap">Emplacements</div>
</div>
<div class="menu" id="m1" style="left:0;top:16.7px;width:144.3px;height:143.4px">
 <svg class="abs" style="left:0;top:0;z-index:2" width="30" height="144" viewBox="0 16.7 30 144"><path d="M13,21 L19.6,19.4 L16.6,24 L20.4,27 L16,28.6 L20.6,32.4 L13.4,33.4 Z" fill="#f4f4f4" stroke="#b9b9b9" stroke-width="0.7"/><path d="M8.6,24 L5.4,31.4 L8,30.6 Z" fill="#dcdcdc" stroke="#aaa" stroke-width="0.5"/><rect x="8" y="18.8" width="5.4" height="15.2" rx="2.7" fill="#d11f1f" stroke="#9a1010" stroke-width="0.5"/><rect x="10" y="22.6" width="1.4" height="3.2" fill="#f6dada"/><path d="M6,40.8 L12,48 M18.4,40.8 L14,48" stroke="#d8d2bf" stroke-width="1.7" stroke-linecap="round"/><path d="M17.6,41.6 L15,46.6" stroke="#b48a4a" stroke-width="1.3"/><path d="M9,45.6 H17.8 L17.2,52.4 Q13.4,54.6 9.6,52.4 Z" fill="#eef0f2" stroke="#aeb4ba" stroke-width="0.7"/><ellipse cx="13.4" cy="45.8" rx="4.4" ry="1.3" fill="#c9ced4"/><rect x="11.8" y="47.6" width="3.2" height="4" fill="#d5dae0"/><ellipse cx="14" cy="66.8" rx="6.9" ry="6.4" fill="#ecd9ae" stroke="#c9a866" stroke-width="0.7" transform="rotate(-20 14 66.8)"/><circle cx="12.4" cy="71" r="1.7" fill="#6db33f"/><circle cx="17.2" cy="69.6" r="1.7" fill="#d8432e"/><circle cx="15" cy="72" r="1.2" fill="#e8a12e"/><circle cx="18" cy="66" r="1.2" fill="#c9c4b6"/><path d="M18.8,60 L9.4,70.4" stroke="#b98c4a" stroke-width="1.3" stroke-linecap="round"/><path d="M10.6,69 L8.8,72.2 Q6.6,73.6 5.2,73.2 Q7.4,71.6 8.2,69.4 Z" fill="#1e1e1e"/><path d="M12.6,66.6 L10.4,69.2" stroke="#9aa0a6" stroke-width="1.5"/><defs><radialGradient id="gl" cx="0.4" cy="0.3" r="0.8"><stop offset="0" stop-color="#9cc0e8"/><stop offset="1" stop-color="#3f74b4"/></radialGradient></defs><circle cx="12.4" cy="87.6" r="7.3" fill="url(#gl)" stroke="#5a7fae" stroke-width="0.7"/><path d="M7.4,85 Q9,82.4 11.6,82.6 Q12,84.6 10.4,85.6 Q10.6,88 8.8,88.6 Q7.2,87.4 7.4,85 Z M13.6,85.4 Q15.8,83.6 17.6,85.4 Q18.4,88.4 16.6,90.6 Q15,90 15,88.2 Q13.2,87.4 13.6,85.4 Z M9.6,90.4 Q11.4,89.8 12.4,91.4 Q12,93 10.4,93 Z" fill="#f2f6fb" opacity="0.92"/><path d="M19.56,107.57 L19.56,109.03 L18.07,109.55 L17.70,110.67 L18.60,111.98 L17.75,113.16 L16.23,112.70 L15.27,113.40 L15.24,114.98 L13.85,115.43 L12.89,114.17 L11.71,114.17 L10.75,115.43 L9.36,114.98 L9.33,113.40 L8.37,112.70 L6.85,113.16 L6.00,111.98 L6.90,110.67 L6.53,109.55 L5.04,109.03 L5.04,107.57 L6.53,107.05 L6.90,105.93 L6.00,104.62 L6.85,103.44 L8.37,103.90 L9.33,103.20 L9.36,101.62 L10.75,101.17 L11.71,102.43 L12.89,102.43 L13.85,101.17 L15.24,101.62 L15.27,103.20 L16.23,103.90 L17.75,103.44 L18.60,104.62 L17.70,105.93 L18.07,107.05 Z" fill="#c9c9c9" stroke="#9c9c9c" stroke-width="0.7" stroke-linejoin="round"/><circle cx="12.3" cy="108.3" r="3.5" fill="#fdfdfd" stroke="#a8a8a8" stroke-width="0.7"/><rect x="5" y="120" width="3.8" height="16.4" fill="#2a2a2a"/><rect x="17.4" y="120" width="3" height="9" fill="#2a2a2a"/><path d="M8.8,125.2 H17.4" stroke="#2a2a2a" stroke-width="1.3"/><rect x="6.2" y="121.4" width="1.4" height="1.2" fill="#e8e8e8"/><rect x="6.2" y="123.8" width="1.4" height="1.2" fill="#e8e8e8"/><rect x="6.2" y="126.2" width="1.4" height="1.2" fill="#e8e8e8"/><rect x="6.2" y="128.6" width="1.4" height="1.2" fill="#e8e8e8"/><rect x="6.2" y="131" width="1.4" height="1.2" fill="#e8e8e8"/><rect x="6.2" y="133.4" width="1.4" height="1.2" fill="#e8e8e8"/><circle cx="13" cy="134.4" r="1.9" fill="#111"/><circle cx="17.8" cy="134.4" r="1.9" fill="#111"/><path d="M14.5,134.4 V129.2 H19.3 V134.4" fill="none" stroke="#111" stroke-width="1"/><path d="M14.5,129.8 H19.3" stroke="#111" stroke-width="1.6"/><path d="M10.8,144.4 Q12.4,142.2 14,144.4" fill="none" stroke="#d2d2d2" stroke-width="0.8"/><rect x="5.8" y="144" width="13.4" height="12.4" rx="1.6" fill="#f0efee" stroke="#dad8d6" stroke-width="0.6"/><circle cx="14" cy="147.7" r="1.7" fill="#7a52b3"/><circle cx="10.3" cy="150.3" r="1.7" fill="#e2606a"/><path d="M15.4,150.8 V154.2 L12.2,152.5 Z" fill="#2a9a9a"/></svg>
 <div class="mi" style="top:0.0px;width:143.7px"><span style="left:24.6px;top:-0.4px">Accessoires</span><i class="arr" style="left:133.3px;top:6.2px"></i></div>
 <div class="mi sel" style="top:20.4px;width:143.7px"><span style="left:24.6px;top:-0.4px">Bureautique</span><i class="arr" style="left:133.3px;top:6.2px"></i></div>
 <div class="mi" style="top:40.8px;width:143.7px"><span style="left:24.6px;top:-0.4px">Graphisme</span><i class="arr" style="left:133.3px;top:6.2px"></i></div>
 <div class="mi" style="top:61.2px;width:143.7px"><span style="left:24.6px;top:-0.4px">Internet</span><i class="arr" style="left:133.3px;top:6.2px"></i></div>
 <div class="mi" style="top:81.6px;width:143.7px"><span style="left:24.6px;top:-0.4px">Outils système</span><i class="arr" style="left:133.3px;top:6.2px"></i></div>
 <div class="mi" style="top:102.0px;width:143.7px"><span style="left:24.6px;top:-0.4px">Son et vidéo</span><i class="arr" style="left:133.3px;top:6.2px"></i></div>
 <div class="abs" style="left:0;top:122.3px;width:143.7px;height:1px;background:#e3e3e3"></div>
 <div class="mi" style="top:122.8px;width:143.7px"><span style="left:24.6px;top:-0.4px">Logiciels</span></div>
</div>
<div class="menu" id="m2" style="left:144.3px;top:36.8px;width:224.7px;height:143.5px;border-left:1px solid #e2e2e2">
 <svg class="abs" style="left:0.1px;top:0;z-index:2" width="30" height="143.4" viewBox="144.7 36.8 30 143.4"><path d="M150.7,39.1 H159.50 L163.9,43.50 V54.7 Q163.9,55.5 163.1,55.5 H150.7 Q149.9,55.5 149.9,54.7 V39.9 Q149.9,39.1 150.7,39.1 Z" fill="#fff" stroke="#4fae50" stroke-width="0.8"/><path d="M159.50,39.1 L163.9,43.50 H160.30 Q159.50,43.50 159.50,42.70 Z" fill="#fff" stroke="#4fae50" stroke-width="0.5"/><path d="M160.80,38.90 H164.10 V42.20 Z" fill="#1f8a2e"/><rect x="152.4" y="46.5" width="9.4" height="6" fill="#5cb85c" stroke="#3d9a44" stroke-width="0.5"/><path d="M157.1,46.7 V52.3" stroke="#b9e3b9" stroke-width="0.7"/><path d="M150.7,59.5 H159.50 L163.9,63.90 V75.1 Q163.9,75.9 163.1,75.9 H150.7 Q149.9,75.9 149.9,75.1 V60.3 Q149.9,59.5 150.7,59.5 Z" fill="#fffef6" stroke="#dcc044" stroke-width="0.8"/><path d="M159.50,59.5 L163.9,63.90 H160.30 Q159.50,63.90 159.50,63.10 Z" fill="#fff" stroke="#dcc044" stroke-width="0.5"/><path d="M160.80,59.30 H164.10 V62.60 Z" fill="#c7a21a"/><circle cx="155.8" cy="69.9" r="2.9" fill="none" stroke="#c9a95e" stroke-width="0.8"/><path d="M155.4,72.7 H161.2 V68.3 Z" fill="none" stroke="#c9a95e" stroke-width="0.8"/><path d="M150.7,79.9 H159.50 L163.9,84.30 V95.5 Q163.9,96.3 163.1,96.3 H150.7 Q149.9,96.3 149.9,95.5 V80.7 Q149.9,79.9 150.7,79.9 Z" fill="#fffdfb" stroke="#aa7444" stroke-width="0.8"/><path d="M159.50,79.9 L163.9,84.30 H160.30 Q159.50,84.30 159.50,83.50 Z" fill="#fff" stroke="#aa7444" stroke-width="0.5"/><path d="M160.80,79.70 H164.10 V83.00 Z" fill="#a23a1c"/><rect x="152.4" y="87.9" width="8.6" height="5.6" fill="#d3a27a" stroke="#a9764e" stroke-width="0.6"/><path d="M155,88.3 V93.1 M158.4,88.3 V93.1" stroke="#e9ccb0" stroke-width="0.6"/><path d="M150.7,100.3 H159.5 L163.9,104.7 V115.9 Q163.9,116.7 163.1,116.7 H150.7 Q149.9,116.7 149.9,115.9 V101.1 Q149.9,100.3 150.7,100.3 Z" fill="#fff" stroke="#6c6c6c" stroke-width="0.8"/><path d="M159.5,100.3 L163.9,104.7 H160.3 Q159.5,104.7 159.5,103.9 Z" fill="#fff" stroke="#6c6c6c" stroke-width="0.5"/><path d="M160.8,100.1 H164.1 V103.4 Z" fill="#2e2e2e"/><path d="M150.7,120.7 H159.50 L163.9,125.10 V136.3 Q163.9,137.1 163.1,137.1 H150.7 Q149.9,137.1 149.9,136.3 V121.5 Q149.9,120.7 150.7,120.7 Z" fill="#fff" stroke="#2f88b8" stroke-width="0.8"/><path d="M159.50,120.7 L163.9,125.10 H160.30 Q159.50,125.10 159.50,124.30 Z" fill="#fff" stroke="#2f88b8" stroke-width="0.5"/><path d="M160.80,120.50 H164.10 V123.80 Z" fill="#15548a"/><path d="M152.4,127.3 h6.4" stroke="#4a9ac4" stroke-width="1"/><path d="M152.4,129.6 h9" stroke="#4a9ac4" stroke-width="1"/><path d="M152.4,131.9 h9" stroke="#4a9ac4" stroke-width="1"/><path d="M152.4,134.2 h7" stroke="#4a9ac4" stroke-width="1"/><path d="M155.2,143.4 Q156.6,141.4 158,143.4" fill="none" stroke="#c9c9c9" stroke-width="0.8"/><rect x="152.6" y="143.2" width="8" height="9" fill="#efefef" stroke="#cfcfcf" stroke-width="0.5"/><path d="M150.4,146.6 L156.6,151 L162.6,146.6 V155 H150.4 Z" fill="#dcdcdc" stroke="#bdbdbd" stroke-width="0.5"/><path d="M150.4,146.6 L155,151 L150.4,155 Z" fill="#c4c4c4"/><circle cx="160.8" cy="153.2" r="3.5" fill="#fcfaff" stroke="#7b3fa3" stroke-width="1"/><path d="M160.8,151.4 V153.4 H162.2" fill="none" stroke="#7b3fa3" stroke-width="0.6"/><rect x="151.2" y="162.6" width="10.6" height="12.4" fill="#f4f4f6" stroke="#dedee2" stroke-width="0.5"/><rect x="158" y="165.6" width="3.2" height="5.4" fill="#e0443e"/><rect x="152.2" y="164.2" width="3.6" height="1.2" fill="#e7a3a0"/><path d="M152.2,166.8 h4.6 M152.2,168.6 h4.6 M152.2,170.4 h4.6" stroke="#cfcfd6" stroke-width="0.7"/><circle cx="153.2" cy="173.0" r="1.5" fill="#dbe6f6" stroke="#23407a" stroke-width="0.7"/><circle cx="157.4" cy="173.0" r="1.5" fill="#dbe6f6" stroke="#23407a" stroke-width="0.7"/><path d="M154.7,172.8 h1.2 M158.9,172.6 l2,-0.6" stroke="#23407a" stroke-width="0.6"/></svg>
 <div class="mi" style="top:0.3px"><span style="left:23.7px;top:-0.3px">LibreOffice Calc</span></div>
 <div class="mi" style="top:20.7px"><span style="left:23.7px;top:-0.3px">LibreOffice Draw</span></div>
 <div class="mi" style="top:41.1px"><span style="left:23.7px;top:-0.3px">LibreOffice Impress</span></div>
 <div class="mi" style="top:61.5px"><span style="left:23.7px;top:-0.3px">LibreOffice Start Center</span></div>
 <div class="mi" style="top:81.9px"><span style="left:23.7px;top:-0.3px">LibreOffice Writer</span></div>
 <div class="mi" style="top:102.3px"><span style="left:23.7px;top:-0.3px">Messagerie et agenda d’Evolution</span></div>
 <div class="mi" style="top:122.7px"><span style="left:23.7px;top:-0.3px">Visionneur de documents</span></div>
</div>
</body>
</html>
